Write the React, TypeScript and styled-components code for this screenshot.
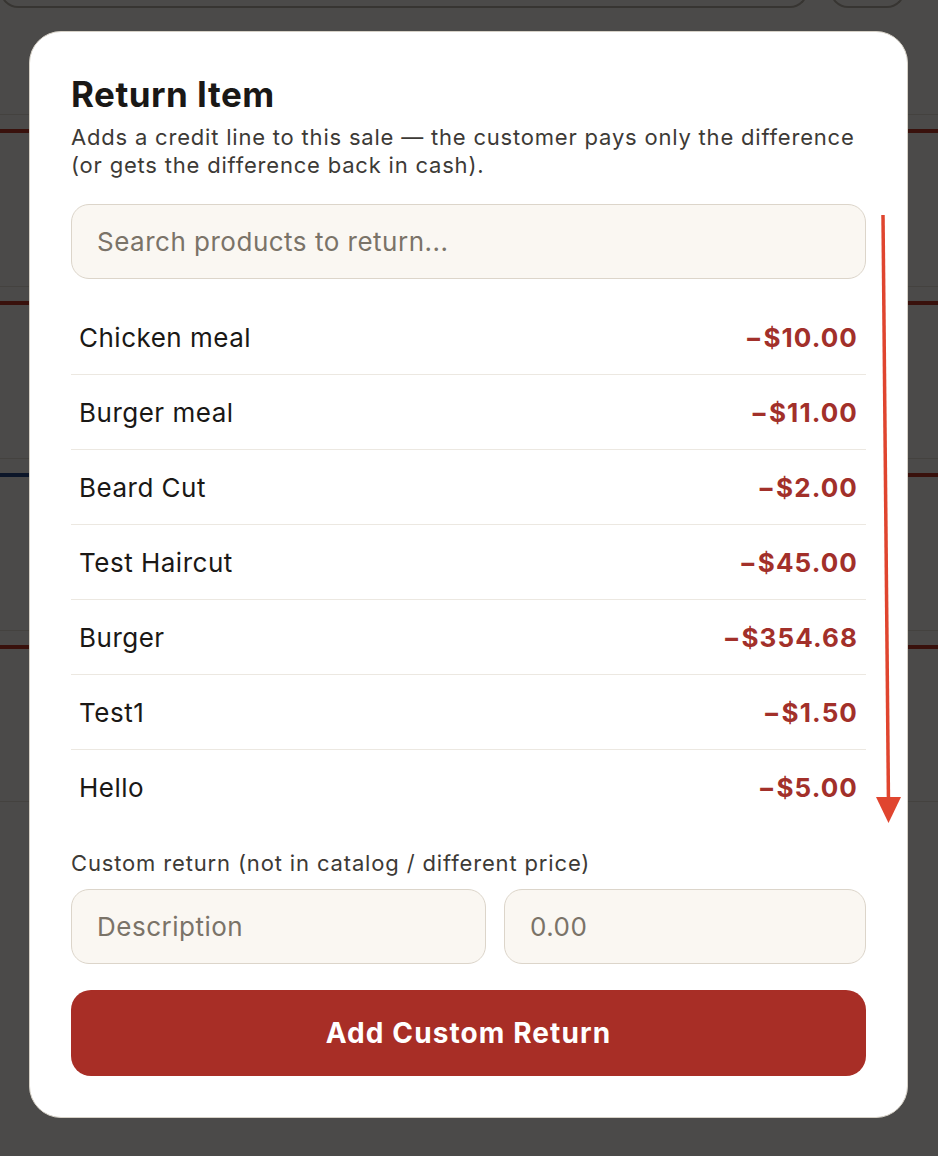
import React from "react";
import styled, { createGlobalStyle } from "styled-components";

const GlobalStyle = createGlobalStyle`
    * {
        box-sizing: border-box;
    }

    body {
        margin: 0;
        font-family: Inter, "Noto Sans", "Liberation Sans", sans-serif;
        background: #fcf9f4;
    }
`;

const products = [
    { name: "Chicken meal", price: 10 },
    { name: "Burger meal", price: 11 },
    { name: "Beard Cut", price: 2 },
    { name: "Test Haircut", price: 45 },
    { name: "Burger", price: 354.68 },
    { name: "Test1", price: 1.5 },
    { name: "Hello", price: 5 }
];

const backCards = [
    { left: "#c0392b", right: "#c0392b" },
    { left: "#c0392b", right: "#c0392b" },
    { left: "#2a4a8a", right: "#c0392b" },
    { left: "#c0392b", right: "#c0392b" }
];

const App = () => {
    return (
        <>
            <GlobalStyle />
            <Page>
                <TopBar>
                    <TopPill grow />
                    <TopPill />
                </TopBar>
                <CardGrid>
                    {backCards.map((card, i) => (
                        <React.Fragment key={i}>
                            <BackCard accent={card.left} />
                            <BackCard accent={card.right} />
                        </React.Fragment>
                    ))}
                </CardGrid>
            </Page>

            <Overlay>
                <Modal>
                    <Title>Return Item</Title>
                    <Subtitle>
                        Adds a credit line to this sale — the customer pays only the difference (or gets the
                        difference back in cash).
                    </Subtitle>

                    <SearchInput placeholder="Search products to return..." />

                    <ProductList>
                        {products.map((p) => (
                            <ProductRow key={p.name}>
                                <ProductName>{p.name}</ProductName>
                                <ProductPrice>−${p.price.toFixed(2)}</ProductPrice>
                            </ProductRow>
                        ))}
                    </ProductList>

                    <FieldLabel>Custom return (not in catalog / different price)</FieldLabel>
                    <CustomRow>
                        <TextField placeholder="Description" />
                        <TextField placeholder="0.00" />
                    </CustomRow>

                    <PrimaryButton>Add Custom Return</PrimaryButton>

                    <ScrollArrow width="30" height="612" viewBox="0 0 30 612">
                        <line x1="8" y1="0" x2="13.5" y2="590" stroke="#e0452f" strokeWidth="3.5" />
                        <polygon points="1,582 26,582 13.5,608" fill="#e0452f" />
                    </ScrollArrow>
                </Modal>
            </Overlay>
        </>
    );
};

const Page = styled.div`
    min-height: 1156px;
    display: flex;
    flex-direction: column;
`;

const TopBar = styled.div`
    display: flex;
    gap: 22px;
    padding: 0 33px 0 0;
    height: 8px;
    align-items: flex-end;
`;

const TopPill = styled.div<{ grow?: boolean }>`
    height: 40px;
    flex: ${(p) => (p.grow ? 1 : "0 0 75px")};
    border: 2px solid #b9b2a7;
    border-radius: 0 0 18px 18px;
    border-top: none;
`;

const CardGrid = styled.div`
    display: grid;
    grid-template-columns: 1fr 1fr;
    column-gap: 20px;
    padding-top: 106px;
`;

const BackCard = styled.div<{ accent: string }>`
    height: 172px;
    border-top: 1px solid #e3ddd3;
    padding-top: 14px;

    &::before {
        content: "";
        display: block;
        height: 4px;
        background: ${(p) => p.accent};
    }

    &:nth-last-child(-n + 2) {
        border-bottom: 1px solid #e3ddd3;
    }
`;

const Overlay = styled.div`
    position: fixed;
    inset: 0;
    background: rgba(0, 0, 0, 0.7);
    display: flex;
    justify-content: flex-start;
    align-items: flex-start;
    padding: 31px 0 0 29px;
`;

const Modal = styled.div`
    position: relative;
    width: 879px;
    padding: 41px 41px 41px 41px;
    background: #ffffff;
    border: 1px solid #d6d1c7;
    border-radius: 32px;
    display: flex;
    flex-direction: column;
`;

const Title = styled.h2`
    margin: 0;
    font-size: 35px;
    line-height: 42px;
    font-weight: 700;
    color: #1a1816;
    letter-spacing: 0.5px;
`;

const Subtitle = styled.p`
    margin: 8px 0 0;
    font-size: 22px;
    line-height: 28px;
    color: #3d3a36;
    letter-spacing: 0.8px;
`;

const inputStyles = `
    height: 75px;
    padding: 0 25px;
    background: #faf7f2;
    border: 1.5px solid #dcd5ca;
    border-radius: 18px;
    font-family: Inter, "Noto Sans", "Liberation Sans", sans-serif;
    font-size: 26px;
    letter-spacing: 0.5px;
    color: #1a1816;
    outline: none;

    &::placeholder {
        color: #7a7368;
    }
`;

const SearchInput = styled.input`
    ${inputStyles}
    width: 100%;
    margin-top: 25px;
`;

const ProductList = styled.div`
    margin-top: 21px;
    display: flex;
    flex-direction: column;
`;

const ProductRow = styled.div`
    height: 75px;
    padding: 0 8px;
    display: flex;
    justify-content: space-between;
    align-items: center;
    border-bottom: 1.5px solid #ece8e1;

    &:last-child {
        border-bottom: none;
    }
`;

const ProductName = styled.span`
    font-size: 26px;
    letter-spacing: 0.5px;
    color: #1a1816;
`;

const ProductPrice = styled.span`
    font-size: 26px;
    font-weight: 700;
    letter-spacing: 1.1px;
    color: #a2302a;
`;

const FieldLabel = styled.div`
    margin-top: 24px;
    font-size: 22px;
    line-height: 28px;
    letter-spacing: 0.85px;
    color: #3d3a36;
`;

const CustomRow = styled.div`
    margin-top: 12px;
    display: grid;
    grid-template-columns: 1fr 362px;
    gap: 18px;
`;

const TextField = styled.input`
    ${inputStyles}
    width: 100%;
`;

const PrimaryButton = styled.button`
    margin-top: 26px;
    height: 86px;
    border: none;
    border-radius: 20px;
    background: #a82e26;
    color: #ffffff;
    font-family: Inter, "Noto Sans", "Liberation Sans", sans-serif;
    font-size: 28px;
    font-weight: 700;
    letter-spacing: 1.1px;
    cursor: pointer;
`;

const ScrollArrow = styled.svg`
    position: absolute;
    top: 183px;
    right: 2px;
`;

export default App;
